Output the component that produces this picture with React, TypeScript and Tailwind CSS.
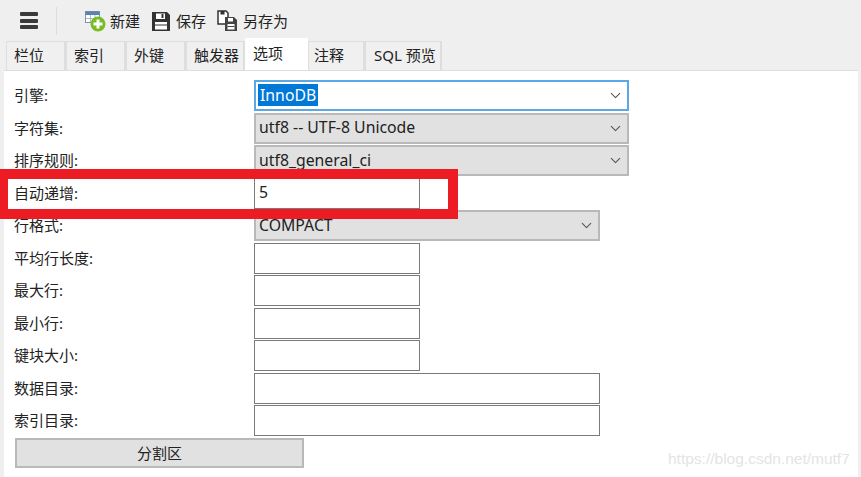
import { ChevronDown } from 'lucide-react';

const font = { fontFamily: '"Noto Sans", "Noto Sans CJK SC", sans-serif' };

const tabs = [
  { name: '栏位', w: 'w-[60px]', pad: 'pl-[7px]' },
  { name: '索引', w: 'w-[60px]', pad: 'pl-[7px]' },
  { name: '外键', w: 'w-[60px]', pad: 'pl-[7px]' },
  { name: '触发器', w: 'w-[59px]', pad: 'pl-[7px]' },
  { name: '选项', w: 'w-[63px]', pad: 'pl-[8px]', active: true },
  { name: '注释', w: 'w-[57px]', pad: 'pl-[5px]' },
  { name: 'SQL 预览', w: 'w-[77px]', pad: 'pl-[8px]' },
];

function NewIcon() {
  return (
    <svg width="21" height="21" viewBox="0 0 21 21">
      <rect x="0.5" y="0.5" width="14" height="11" fill="#fff" stroke="#7d93ad" />
      <rect x="0.5" y="0.5" width="14" height="3.5" fill="#5c82b0" />
      <path d="M1 7.5h13M5.5 4v7M10 4v7" stroke="#a9b7c8" />
      <circle cx="13" cy="13" r="7.5" fill="#76bd22" />
      <path d="M13 8.5v9M8.5 13h9" stroke="#fff" strokeWidth="3" />
    </svg>
  );
}

function SaveIcon() {
  return (
    <svg width="20" height="21" viewBox="0 0 20 21">
      <path d="M1 1h15l3 3v16H1z" fill="#333" />
      <rect x="5" y="2.5" width="9" height="5.5" fill="#fff" />
      <rect x="10.5" y="3" width="2" height="4" fill="#333" />
      <rect x="4" y="11" width="12" height="7.5" fill="#fff" />
      <path d="M4 14h12" stroke="#333" />
    </svg>
  );
}

function SaveAsIcon() {
  return (
    <svg width="21" height="22" viewBox="0 0 21 22">
      <path d="M1 1h8l2 2v11H1z" fill="#fff" stroke="#333" strokeWidth="1.5" />
      <rect x="3.5" y="1" width="4" height="3.5" fill="#333" />
      <path d="M8 7h9l3 3v11H8z" fill="#444" />
      <rect x="11" y="8" width="5" height="3.5" fill="#fff" />
      <rect x="10.5" y="14" width="7" height="5.5" fill="#fff" />
      <path d="M10.5 16.5h7" stroke="#444" />
    </svg>
  );
}

function Label({ text }: { text: string }) {
  return <div className="w-[250px] shrink-0 pl-[10px] text-[15px] leading-[30px] text-[#222]">{text}</div>;
}

function SelectBox({ value, width }: { value: string; width: string }) {
  return (
    <div className={`flex h-[31px] items-center justify-between border-2 border-[#b9b9b9] bg-[#e1e1e1] pr-[3px] pl-[3px] text-[15.8px] leading-[26px] text-[#222] ${width}`}>
      <span className="-mt-[2px]">{value}</span>
      <ChevronDown size={17} strokeWidth={1.5} className="text-[#555]" />
    </div>
  );
}

function TextBox({ value, width }: { value?: string; width: string }) {
  return (
    <div className={`flex h-[31px] items-center border border-[#7a7a7a] bg-white pl-[4px] text-[15.8px] text-[#222] ${width}`}>
      {value}
    </div>
  );
}

function Row({ label, children }: { label: string; children: React.ReactNode }) {
  return (
    <div className="flex h-[32.5px]">
      <Label text={label} />
      {children}
    </div>
  );
}

export default function App() {
  return (
    <div className="relative flex h-[477px] w-[861px] flex-col overflow-hidden bg-[#efefef]" style={font}>
      {/* toolbar */}
      <div className="flex h-[38px] shrink-0 items-start text-[15px] text-[#222]">
        <div className="mt-[12px] ml-[20px] flex h-[17px] w-[18px] flex-col justify-between">
          <div className="h-[4px] rounded-[1px] bg-[#3a3a3a]" />
          <div className="h-[4px] rounded-[1px] bg-[#3a3a3a]" />
          <div className="h-[4px] rounded-[1px] bg-[#3a3a3a]" />
        </div>
        <div className="mt-[7px] ml-[18px] h-[28px] w-px bg-[#dcdcdc]" />
        <div className="mt-[10px] ml-[28px] flex items-center gap-[4px]">
          <NewIcon />
          <span className="leading-[22px]">新建</span>
        </div>
        <div className="mt-[10px] ml-[11px] flex items-center gap-[5px]">
          <SaveIcon />
          <span className="leading-[22px]">保存</span>
        </div>
        <div className="mt-[10px] ml-[11px] flex items-center gap-[5px]">
          <SaveAsIcon />
          <span className="leading-[22px]">另存为</span>
        </div>
      </div>

      {/* tabs */}
      <div className="flex h-[32px] shrink-0 items-end pl-[6px] text-[15px] text-[#222]">
        {tabs.map((t) =>
          t.active ? (
            <div key={t.name} className={`h-[32px] bg-white pt-[2px] leading-[26px] ${t.w} ${t.pad}`}>
              {t.name}
            </div>
          ) : (
            <div
              key={t.name}
              className={`h-[29px] border border-r-2 border-b-0 border-[#dedede] bg-[#f0f0f0] leading-[26px] ${t.w} ${t.pad}`}
            >
              {t.name}
            </div>
          ),
        )}
      </div>

      {/* options panel */}
      <div className="mr-[3px] ml-[4px] flex-1 border-t border-[#dedede] bg-white pt-[9px]">
        <Row label="引擎:">
          <div className="flex h-[31px] w-[375px] items-center justify-between border-2 border-[#5aa9e6] bg-white pr-[3px] pl-[2px] text-[15.8px]">
            <span className="-mt-[2px] bg-[#0078d7] px-[2px] leading-[22px] text-white">InnoDB</span>
            <ChevronDown size={17} strokeWidth={1.5} className="text-[#555]" />
          </div>
        </Row>
        <Row label="字符集:">
          <SelectBox value="utf8 -- UTF-8 Unicode" width="w-[375px]" />
        </Row>
        <Row label="排序规则:">
          <SelectBox value="utf8_general_ci" width="w-[375px]" />
        </Row>
        <Row label="自动递增:">
          <TextBox value="5" width="w-[166px]" />
        </Row>
        <Row label="行格式:">
          <SelectBox value="COMPACT" width="w-[346px]" />
        </Row>
        <Row label="平均行长度:">
          <TextBox width="w-[166px]" />
        </Row>
        <Row label="最大行:">
          <TextBox width="w-[166px]" />
        </Row>
        <Row label="最小行:">
          <TextBox width="w-[166px]" />
        </Row>
        <Row label="键块大小:">
          <TextBox width="w-[166px]" />
        </Row>
        <Row label="数据目录:">
          <TextBox width="w-[346px]" />
        </Row>
        <Row label="索引目录:">
          <TextBox width="w-[346px]" />
        </Row>
        <button className="ml-[11px] h-[30px] w-[289px] border-2 border-[#b9b9b9] bg-[#e1e1e1] text-[15px] leading-[24px] text-[#222]">
          分割区
        </button>
      </div>

      {/* red annotation */}
      <div className="absolute top-[169px] left-0 h-[50px] w-[458px] border-[10px] border-l-[8px] border-[#ed1c24]" />
      {/* watermark */}
      <div
        className="absolute top-[449px] left-[668px] text-[15.5px] leading-[20px] text-[#e4e4e4]"
        style={{ fontFamily: '"Liberation Sans", sans-serif' }}
      >
        https://blog.csdn.net/mutf7
      </div>
    </div>
  );
}
